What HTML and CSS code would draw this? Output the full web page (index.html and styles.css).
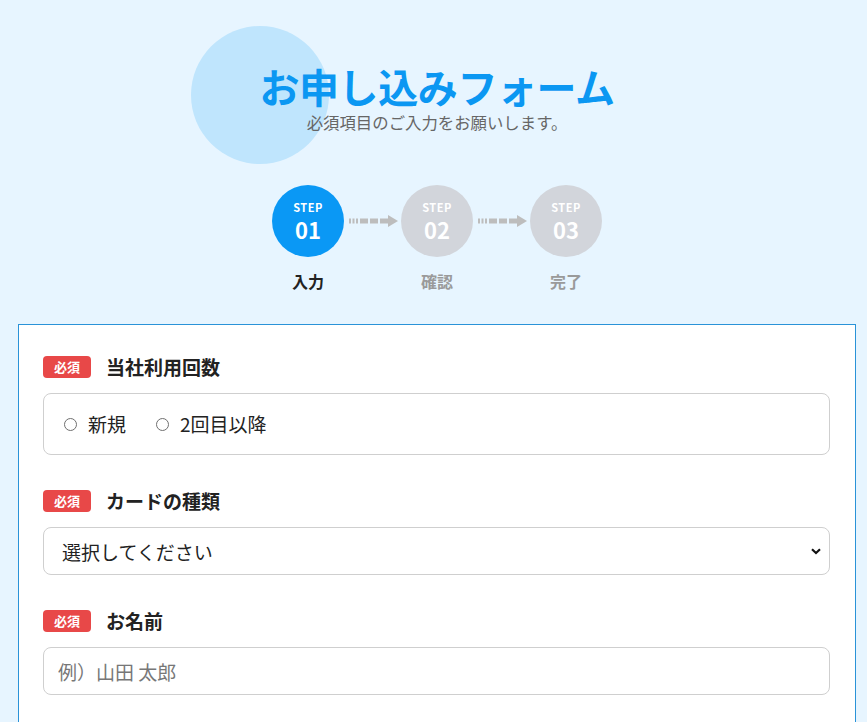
FILE: index.html
```html
<!DOCTYPE html>
<html lang="ja">
<head>
<meta charset="utf-8">
<title>お申し込みフォーム</title>
<link rel="stylesheet" href="styles.css">
</head>
<body>
<div class="page">
  <header class="hero">
    <span class="hero-deco"></span>
    <h1 class="hero-title">お申し込みフォーム</h1>
    <p class="hero-sub">必須項目のご入力をお願いします。</p>
    <ol class="steps">
      <li class="step is-active">
        <span class="step-circle"><span class="step-en">STEP</span><span class="step-num">01</span></span>
        <span class="step-label">入力</span>
      </li>
      <li class="step-arrow" aria-hidden="true">
        <svg width="49" height="12" viewBox="0 0 49 12"><g fill="#bdbdbd"><rect x="0" y="3.5" width="2" height="5"/><rect x="3.5" y="3.5" width="2" height="5"/><rect x="7" y="3.5" width="2" height="5"/><rect x="11" y="3.5" width="8" height="5"/><rect x="21" y="3.5" width="8" height="5"/><rect x="31" y="3.5" width="9" height="5"/><polygon points="39,0 49,6 39,12"/></g></svg>
      </li>
      <li class="step">
        <span class="step-circle"><span class="step-en">STEP</span><span class="step-num">02</span></span>
        <span class="step-label">確認</span>
      </li>
      <li class="step-arrow" aria-hidden="true">
        <svg width="49" height="12" viewBox="0 0 49 12"><g fill="#bdbdbd"><rect x="0" y="3.5" width="2" height="5"/><rect x="3.5" y="3.5" width="2" height="5"/><rect x="7" y="3.5" width="2" height="5"/><rect x="11" y="3.5" width="8" height="5"/><rect x="21" y="3.5" width="8" height="5"/><rect x="31" y="3.5" width="9" height="5"/><polygon points="39,0 49,6 39,12"/></g></svg>
      </li>
      <li class="step">
        <span class="step-circle"><span class="step-en">STEP</span><span class="step-num">03</span></span>
        <span class="step-label">完了</span>
      </li>
    </ol>
  </header>

  <form class="card">
    <div class="field">
      <div class="field-head"><span class="badge">必須</span><span class="field-label">当社利用回数</span></div>
      <div class="radio-box">
        <label class="radio"><input type="radio" name="count"><span>新規</span></label>
        <label class="radio"><input type="radio" name="count"><span>2回目以降</span></label>
      </div>
    </div>
    <div class="field">
      <div class="field-head"><span class="badge">必須</span><span class="field-label">カードの種類</span></div>
      <select class="control select">
        <option>選択してください</option>
      </select>
    </div>
    <div class="field">
      <div class="field-head"><span class="badge">必須</span><span class="field-label">お名前</span></div>
      <input class="control input" type="text" placeholder="例）山田 太郎">
    </div>
  </form>
</div>
</body>
</html>
```

FILE: styles.css
```css
* { box-sizing: border-box; }
html, body { margin: 0; padding: 0; }
body {
  background: #e7f5ff;
  font-family: "Noto Sans CJK JP", "Noto Sans", sans-serif;
  color: #222;
  overflow: hidden;
}
.page {
  width: 838px;
  margin-left: 18px;
}
.hero {
  position: relative;
  padding-top: 63px;
  text-align: center;
}
.hero-deco {
  position: absolute;
  left: calc(50% - 246px);
  top: 26px;
  width: 138px;
  height: 138px;
  border-radius: 50%;
  background: #bfe5fd;
}
.hero-title {
  position: relative;
  margin: 0;
  font-size: 40px;
  line-height: 47px;
  font-weight: 700;
  color: #0b97f2;
  letter-spacing: -0.4px;
}
.hero-sub {
  position: relative;
  margin: 0;
  font-size: 16.4px;
  line-height: 24px;
  color: #666;
}
.steps {
  list-style: none;
  margin: 51px 0 0;
  padding: 0;
  display: flex;
  justify-content: center;
  align-items: flex-start;
}
.step {
  width: 72px;
  display: flex;
  flex-direction: column;
  align-items: center;
}
.step-circle {
  width: 72px;
  height: 72px;
  border-radius: 50%;
  background: #d2d5db;
  color: #fff;
  display: flex;
  flex-direction: column;
  align-items: center;
  justify-content: center;
  font-weight: 700;
}
.is-active .step-circle { background: #0a98f5; }
.step-en {
  font-size: 11px;
  line-height: 16px;
  letter-spacing: 0.5px;
}
.step-num {
  font-size: 22px;
  line-height: 28px;
}
.step-label {
  margin-top: 12px;
  font-size: 16px;
  line-height: 24px;
  font-weight: 700;
  color: #9a9a9a;
}
.is-active .step-label { color: #222; }
.step-arrow {
  width: 57px;
  height: 72px;
  display: flex;
  align-items: center;
  justify-content: center;
  padding-left: 1px;
}
.card {
  margin-top: 31px;
  background: #fff;
  border: 1px solid #2a93d8;
  padding: 29px 25px 40px 24px;
}
.field + .field { margin-top: 33px; }
.field-head {
  display: flex;
  align-items: center;
  gap: 15px;
  height: 26px;
}
.badge {
  width: 48px;
  height: 22px;
  border-radius: 4px;
  background: #e84848;
  color: #fff;
  font-size: 13px;
  font-weight: 700;
  line-height: 22px;
  text-align: center;
}
.field-label {
  font-size: 19px;
  font-weight: 700;
  line-height: 26px;
}
.radio-box {
  margin-top: 13px;
  height: 62px;
  border: 1px solid #cfcfcf;
  border-radius: 8px;
  padding: 0 20px;
  display: flex;
  align-items: center;
  gap: 30px;
}
.radio {
  display: flex;
  align-items: center;
  gap: 11px;
  font-size: 19px;
  line-height: 26px;
}
.radio input {
  appearance: none;
  -webkit-appearance: none;
  margin: 0;
  width: 13px;
  height: 13px;
  border: 1px solid #6f6f6f;
  border-radius: 50%;
  background: #fff;
}
.control {
  display: block;
  width: 100%;
  margin-top: 13px;
  height: 48px;
  border: 1px solid #cfcfcf;
  border-radius: 8px;
  background-color: #fff;
  font-family: inherit;
  font-size: 19px;
  color: #222;
  outline: none;
}
.select {
  appearance: none;
  -webkit-appearance: none;
  padding: 0 40px 0 18px;
  background-image: url("data:image/svg+xml,%3Csvg xmlns='http://www.w3.org/2000/svg' width='10' height='7' viewBox='0 0 10 7'%3E%3Cpath d='M1 1.2 L5 5 L9 1.2' fill='none' stroke='%23111' stroke-width='2.2'/%3E%3C/svg%3E");
  background-repeat: no-repeat;
  background-position: right 8px center;
}
.input {
  padding: 0 14px;
}
.input::placeholder { color: #777; }
```
